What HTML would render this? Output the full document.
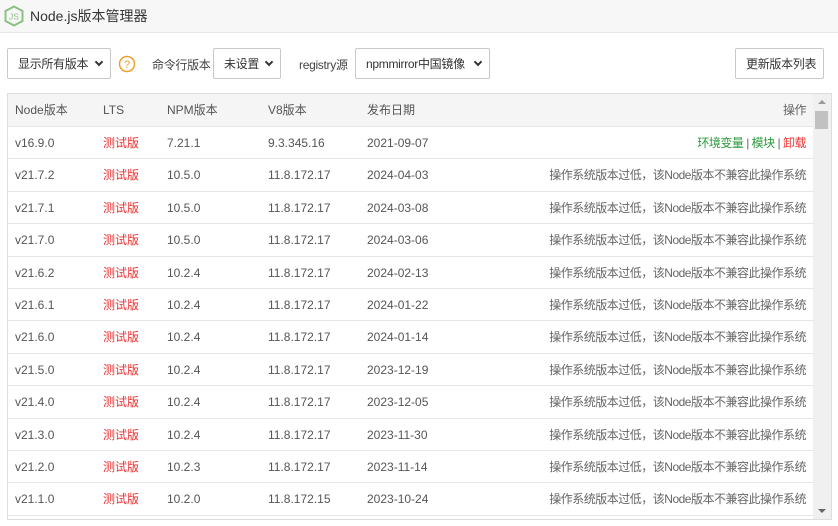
<!DOCTYPE html>
<html><head><meta charset="utf-8"><style>
*{margin:0;padding:0;box-sizing:border-box}
body{width:838px;height:526px;overflow:hidden;background:#fff;font-family:"Liberation Sans","Noto Sans CJK SC",sans-serif;font-size:12px;color:#555;position:relative}
.title{height:33px;background:#f7f7f7;border-bottom:1px solid #e8e8e8;display:flex;align-items:center;padding-left:4px;font-size:14px;color:#333}
.title svg{margin-right:6px}
.ctl{position:absolute;top:48px;height:31px;border:1px solid #c8c8c8;border-radius:2px;background:#fff;display:flex;align-items:center;padding-left:10px;color:#333;font-size:12px;letter-spacing:-0.3px}
.ctl .ar{position:absolute;right:8px;top:10px;width:6px;height:6px;border-right:2px solid #333;border-bottom:2px solid #333;transform:rotate(45deg)}
.lbl{position:absolute;top:56px;color:#444;letter-spacing:-0.3px}
.tbl{position:absolute;left:7px;top:93px;width:825px;height:427px;border:1px solid #ddd;overflow:hidden}
.row{position:absolute;left:0;width:806px;height:32.4px;border-bottom:1px solid #e6e6e6;line-height:32px}
.row span{position:absolute;top:0}
.hd{background:#f5f5f5;height:33px;line-height:33px}
.r{right:8px;letter-spacing:-0.5px;color:#666}
.red{color:#e33}.grn{color:#2a9a3a}
.sb{position:absolute;right:0;top:0;width:18px;height:100%;background:#f0f0f0}
</style></head><body>
<div class="title"><svg width="20" height="22" viewBox="0 0 20 22"><polygon points="10,1.5 18.5,6 18.5,16 10,20.5 1.5,16 1.5,6" fill="none" stroke="#8cc084" stroke-width="2"/><text x="10" y="14.5" font-size="8.5" text-anchor="middle" fill="#8cc084" font-family="Liberation Sans">JS</text></svg>Node.js版本管理器</div>
<div class="ctl" style="left:7px;width:104px">显示所有版本<i class="ar"></i></div>
<svg style="position:absolute;left:118px;top:55px" width="18" height="18"><circle cx="9" cy="9" r="7.5" fill="none" stroke="#f0a030" stroke-width="1.5"/><text x="9" y="13" font-size="11" text-anchor="middle" fill="#f0a030" font-family="Liberation Sans">?</text></svg>
<span class="lbl" style="left:152px">命令行版本</span>
<div class="ctl" style="left:213px;width:68px">未设置<i class="ar"></i></div>
<span class="lbl" style="left:299px">registry源</span>
<div class="ctl" style="left:355px;width:135px">npmmirror中国镜像<i class="ar"></i></div>
<div class="ctl" style="left:735px;width:89px;padding-left:10px">更新版本列表</div>
<div class="tbl">
<div class="row hd" style="top:0"><span style="left:7px">Node版本</span><span style="left:95px">LTS</span><span style="left:159px">NPM版本</span><span style="left:260px">V8版本</span><span style="left:359px">发布日期</span><span class="r">操作</span></div>
<div class="row" style="top:33px"><span style="left:7px">v16.9.0</span><span style="left:95px" class="red">测试版</span><span style="left:159px">7.21.1</span><span style="left:260px">9.3.345.16</span><span style="left:359px">2021-09-07</span><span class="r"><b class="grn" style="font-weight:normal">环境变量</b> | <b class="grn" style="font-weight:normal">模块</b> | <b class="red" style="font-weight:normal">卸载</b></span></div>
<div class="row" style="top:65.4px"><span style="left:7px">v21.7.2</span><span style="left:95px" class="red">测试版</span><span style="left:159px">10.5.0</span><span style="left:260px">11.8.172.17</span><span style="left:359px">2024-04-03</span><span class="r">操作系统版本过低，该Node版本不兼容此操作系统</span></div>
<div class="row" style="top:97.8px"><span style="left:7px">v21.7.1</span><span style="left:95px" class="red">测试版</span><span style="left:159px">10.5.0</span><span style="left:260px">11.8.172.17</span><span style="left:359px">2024-03-08</span><span class="r">操作系统版本过低，该Node版本不兼容此操作系统</span></div>
<div class="row" style="top:130.2px"><span style="left:7px">v21.7.0</span><span style="left:95px" class="red">测试版</span><span style="left:159px">10.5.0</span><span style="left:260px">11.8.172.17</span><span style="left:359px">2024-03-06</span><span class="r">操作系统版本过低，该Node版本不兼容此操作系统</span></div>
<div class="row" style="top:162.6px"><span style="left:7px">v21.6.2</span><span style="left:95px" class="red">测试版</span><span style="left:159px">10.2.4</span><span style="left:260px">11.8.172.17</span><span style="left:359px">2024-02-13</span><span class="r">操作系统版本过低，该Node版本不兼容此操作系统</span></div>
<div class="row" style="top:195px"><span style="left:7px">v21.6.1</span><span style="left:95px" class="red">测试版</span><span style="left:159px">10.2.4</span><span style="left:260px">11.8.172.17</span><span style="left:359px">2024-01-22</span><span class="r">操作系统版本过低，该Node版本不兼容此操作系统</span></div>
<div class="row" style="top:227.4px"><span style="left:7px">v21.6.0</span><span style="left:95px" class="red">测试版</span><span style="left:159px">10.2.4</span><span style="left:260px">11.8.172.17</span><span style="left:359px">2024-01-14</span><span class="r">操作系统版本过低，该Node版本不兼容此操作系统</span></div>
<div class="row" style="top:259.8px"><span style="left:7px">v21.5.0</span><span style="left:95px" class="red">测试版</span><span style="left:159px">10.2.4</span><span style="left:260px">11.8.172.17</span><span style="left:359px">2023-12-19</span><span class="r">操作系统版本过低，该Node版本不兼容此操作系统</span></div>
<div class="row" style="top:292.2px"><span style="left:7px">v21.4.0</span><span style="left:95px" class="red">测试版</span><span style="left:159px">10.2.4</span><span style="left:260px">11.8.172.17</span><span style="left:359px">2023-12-05</span><span class="r">操作系统版本过低，该Node版本不兼容此操作系统</span></div>
<div class="row" style="top:324.6px"><span style="left:7px">v21.3.0</span><span style="left:95px" class="red">测试版</span><span style="left:159px">10.2.4</span><span style="left:260px">11.8.172.17</span><span style="left:359px">2023-11-30</span><span class="r">操作系统版本过低，该Node版本不兼容此操作系统</span></div>
<div class="row" style="top:357px"><span style="left:7px">v21.2.0</span><span style="left:95px" class="red">测试版</span><span style="left:159px">10.2.3</span><span style="left:260px">11.8.172.17</span><span style="left:359px">2023-11-14</span><span class="r">操作系统版本过低，该Node版本不兼容此操作系统</span></div>
<div class="row" style="top:389.4px"><span style="left:7px">v21.1.0</span><span style="left:95px" class="red">测试版</span><span style="left:159px">10.2.0</span><span style="left:260px">11.8.172.15</span><span style="left:359px">2023-10-24</span><span class="r">操作系统版本过低，该Node版本不兼容此操作系统</span></div>
<div class="sb"><div style="position:absolute;left:5px;top:6px;border:4px solid transparent;border-bottom:4px solid #999;border-top:0"></div><div style="position:absolute;left:2px;top:17px;width:13px;height:18px;background:#c1c1c1"></div><div style="position:absolute;left:5px;bottom:6px;border:4px solid transparent;border-top:4px solid #666;border-bottom:0"></div></div>
</div>
</body></html>
